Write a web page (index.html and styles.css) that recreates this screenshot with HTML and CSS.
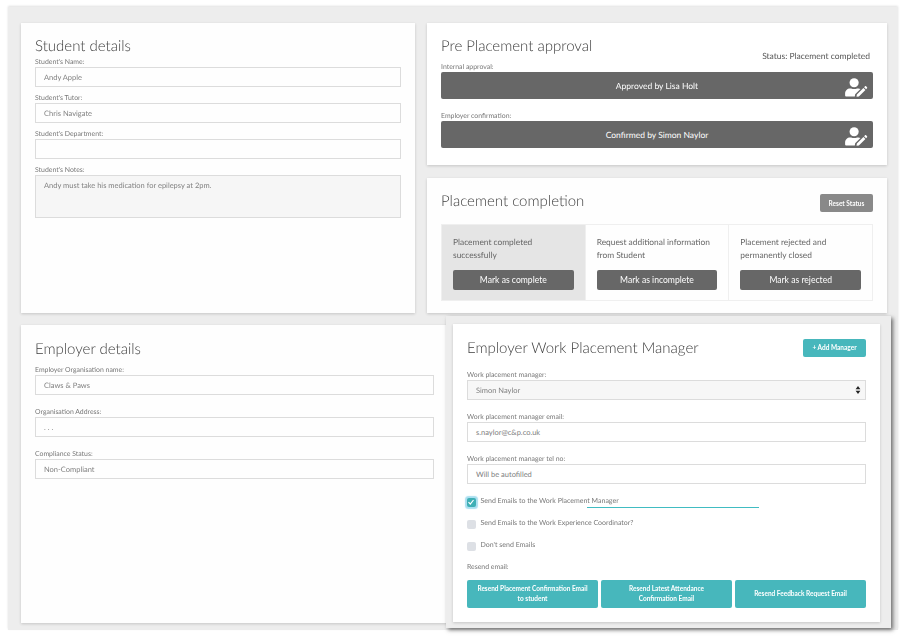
FILE: index.html
```html
<!DOCTYPE html>
<html lang="en">
<head>
<meta charset="utf-8">
<title>Placement</title>
<link rel="stylesheet" href="styles.css">
</head>
<body>
<svg class="defs" width="0" height="0" aria-hidden="true">
  <symbol id="user-edit" viewBox="0 0 24 20">
    <circle cx="9.5" cy="5" r="4.8"/>
    <path d="M1 19.5c-.6 0-1-.4-1-1v-2.2C0 13.2 2.4 11 5.2 11h1.2c1 .5 2 .7 3.1.7s2.100-.2 3.100-.7h1.200c.9 0 1.700.2 2.400.6L10.600 17l-.4 2.500z"/>
    <path d="M12 19.800l.4-2.500 6.900-6.900 2.100 2.100-6.900 6.900zM20 9.700l1-1c.3-.3.800-.3 1.100 0l1 1c.3.300.3.800 0 1.100l-1 1z"/>
  </symbol>
</svg>
<main class="sheet">
  <div class="row row-top">
    <section class="card student">
      <h2 class="title">Student details</h2>
      <div class="fields fields-tight">
        <div class="field"><label class="label">Student's Name:</label><div class="input">Andy Apple</div></div>
        <div class="field"><label class="label">Student's Tutor:</label><div class="input">Chris Navigate</div></div>
        <div class="field"><label class="label">Student's Department:</label><div class="input"></div></div>
        <div class="field"><label class="label">Student's Notes:</label><div class="input textarea">Andy must take his medication for epilepsy at 2pm.</div></div>
      </div>
    </section>
    <div class="stack">
      <section class="card approval">
        <div class="head head-approval">
          <h2 class="title">Pre Placement approval</h2>
          <span class="status">Status: Placement completed</span>
        </div>
        <label class="label">Internal approval:</label>
        <div class="bar">Approved by Lisa Holt<svg class="bar-icon"><use href="#user-edit"/></svg></div>
        <label class="label label-second">Employer confirmation:</label>
        <div class="bar">Confirmed by Simon Naylor<svg class="bar-icon"><use href="#user-edit"/></svg></div>
      </section>
      <section class="card completion">
        <div class="head">
          <h2 class="title">Placement completion</h2>
          <button class="btn btn-reset">Reset Status</button>
        </div>
        <div class="options">
          <div class="option option-on"><p>Placement completed successfully</p><button class="btn btn-mark">Mark as complete</button></div>
          <div class="option"><p>Request additional information from Student</p><button class="btn btn-mark">Mark as incomplete</button></div>
          <div class="option"><p>Placement rejected and permanently closed</p><button class="btn btn-mark">Mark as rejected</button></div>
        </div>
      </section>
    </div>
  </div>
  <section class="card employer">
    <h2 class="title">Employer details</h2>
    <div class="fields">
      <div class="field"><label class="label">Employer Organisation name:</label><div class="input">Claws &amp; Paws</div></div>
      <div class="field"><label class="label">Organisation Address:</label><div class="input">. . .</div></div>
      <div class="field"><label class="label">Compliance Status:</label><div class="input">Non-Compliant</div></div>
    </div>
  </section>
  <aside class="overlay">
    <section class="card manager">
      <div class="head head-center">
        <h2 class="title">Employer Work Placement Manager</h2>
        <button class="btn btn-add">+ Add Manager</button>
      </div>
      <div class="fields">
        <div class="field"><label class="label">Work placement manager:</label>
          <div class="input select">Simon Naylor
            <svg class="updown" viewBox="0 0 6 10"><path d="M3 0l3 4H0zM3 10L0 6h6z"/></svg>
          </div>
        </div>
        <div class="field"><label class="label">Work placement manager email:</label><div class="input">s.naylor@c&amp;p.co.uk</div></div>
        <div class="field"><label class="label">Work placement manager tel no:</label><div class="input">Will be autofilled</div></div>
      </div>
      <div class="checks">
        <div class="check check-on"><span class="box"><svg viewBox="0 0 8 8"><path d="M1.500 4.200l1.800 1.800 3.200-4" /></svg></span><span class="check-text">Send Emails to the Work Placement Manager</span><span class="underline"></span></div>
        <div class="check"><span class="box"></span><span class="check-text">Send Emails to the Work Experience Coordinator?</span></div>
        <div class="check"><span class="box"></span><span class="check-text">Don't send Emails</span></div>
      </div>
      <label class="label resend-label">Resend email:</label>
      <div class="resend">
        <button class="btn btn-teal">Resend Placement Confirmation Email to student</button>
        <button class="btn btn-teal">Resend Latest Attendance Confirmation Email</button>
        <button class="btn btn-teal">Resend Feedback Request Email</button>
      </div>
    </section>
  </aside>
</main>
</body>
</html>
```
FILE: styles.css
```css
* { box-sizing: border-box; }
html, body { margin: 0; padding: 0; background: #fff; }
body { width: 904px; height: 641px; overflow: hidden; font-family: Lato, "Open Sans", sans-serif; color: #666; text-rendering: geometricPrecision; }
.defs { position: absolute; }
.sheet {
  position: relative;
  margin: 7px 0 0 8px;
  width: 890px;
  height: 623px;
  padding: 16px 0 0 13px;
  background: #ededed;
  box-shadow: 0 -1px 2px rgba(0,0,0,.12);
  filter: blur(.4px);
}
.row { display: flex; gap: 12px; }
.row-top { height: 290px; }
.stack { display: flex; flex-direction: column; gap: 13px; width: 460px; flex: none; }
.card { background: #fff; box-shadow: 0 1px 3px rgba(0,0,0,.18); opacity: .99; }
.student { width: 394px; flex: none; padding: 13px 14px 0; }
.approval { height: 142px; padding: 13px 14px 0; }
.completion { height: 135px; padding: 13px 14px 0; }
.employer { width: 440px; height: 298px; margin-top: 12px; padding: 14px 27px 0 14px; }
.title { margin: 0 0 -2px; font-size: 15px; line-height: 21px; font-weight: 300; color: #3c3c3c; }
.head { display: flex; justify-content: space-between; align-items: flex-start; }
.head-approval { height: 26px; }
.head-center { align-items: center; }
.status { font-size: 8.500px; color: #555; margin: 14px 3px 0 0; line-height: 12px; }
.label { display: block; margin-bottom: -2px; font-size: 6.900px; line-height: 11px; color: #777; }
.label-second { margin-top: 12px; }
.fields { display: flex; flex-direction: column; gap: 12px; margin-top: 7px; }
.fields-tight { margin-top: 2px; gap: 6px; }
.input {
  position: relative;
  height: 20px;
  margin-top: 1px;
  padding: 0 8px;
  border: 1px solid #dcdcdc;
  background: #fff;
  font-size: 7.500px;
  line-height: 19px;
  color: #808080;
}
.textarea { height: 43px; background: #f7f7f7; }
.bar {
  position: relative;
  height: 27px;
  margin-top: 1px;
  border-radius: 2px;
  background: #666;
  color: #fff;
  text-align: center;
  font-size: 8.500px;
  line-height: 29px;
}
.bar-icon { position: absolute; right: 5px; top: 6px; width: 23px; height: 19px; fill: #fff; }
.btn { display: block; border: 0; font-family: inherit; color: #fff; padding: 0; cursor: pointer; }
.btn-reset { width: 53px; height: 18px; border-radius: 2px; background: #888; font-size: 6.500px; font-weight: 700; margin-top: 3px; }
.options { display: flex; height: 77px; margin-top: 12px; border: 1px solid #f0f0f0; }
.option { flex: 1; padding: 11px 11px 0 11px; border-left: 1px solid #f0f0f0; }
.option:first-child { border-left: 0; }
.option-on { background: #e5e5e5; }
.option p { margin: 0; height: 33px; font-size: 8.400px; line-height: 13px; color: #666; }
.btn-mark { width: 100%; height: 20px; margin-top: 1px; border-radius: 2px; background: #666; font-size: 8.600px; }
.overlay {
  position: absolute;
  left: 438px;
  top: 309px;
  width: 445px;
  height: 312px;
  padding: 8px 11px 0 7px;
  background: #ededed;
  box-shadow: 2px 2px 4px rgba(0,0,0,.55);
}
.manager { height: 298px; padding: 14px 14px 0; }
.btn-add { width: 63px; height: 18px; border-radius: 2px; background: #45b7bc; font-size: 6.500px; font-weight: 700; }
.manager .fields { margin-top: 13px; gap: 12px; }
.select { background: #f7f7f7; }
.updown { position: absolute; right: 4px; top: 5px; width: 6px; height: 8px; fill: #222; }
.checks { display: flex; flex-direction: column; gap: 14px; margin-top: 13px; }
.check { position: relative; display: flex; align-items: flex-start; gap: 5px; height: 8px; font-size: 7px; line-height: 8px; color: #777; }
.box { width: 8.500px; height: 9px; margin-top: 1px; border-radius: 2px; background: #dde0e5; flex: none; }
.check-on .box { background: #3cafb5; box-shadow: 0 0 1px 1.500px #aadff0; }
.box svg { display: block; width: 8px; height: 8px; fill: none; stroke: #fff; stroke-width: 1.200; }
.underline { position: absolute; left: 120px; top: 10px; width: 172px; height: 1px; background: #3fbcc2; }
.resend-label { margin-top: 13px; }
.resend { display: flex; gap: 3px; margin-top: 9px; }
.btn-teal { flex: 1; height: 28px; border-radius: 2px; background: #45b7bc; font-size: 6.500px; font-weight: 700; line-height: 10.500px; padding: 0 9.500px; }
```
